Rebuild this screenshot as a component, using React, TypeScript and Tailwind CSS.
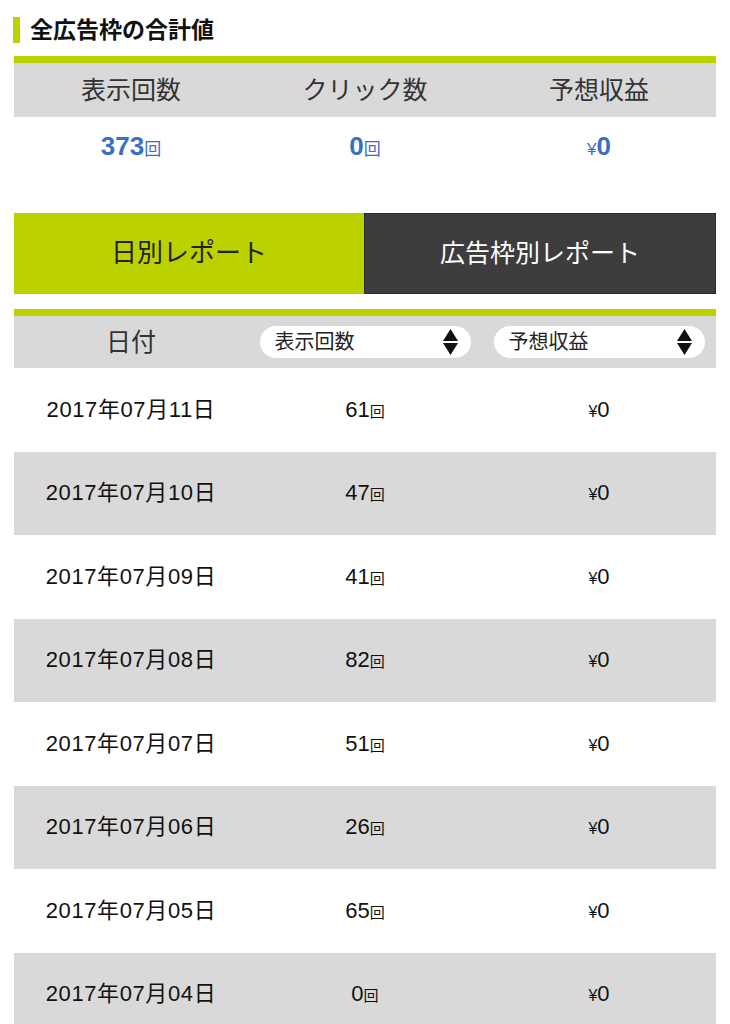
import React from "react";

const rows = [
  { date: "2017年07月11日", count: 61 },
  { date: "2017年07月10日", count: 47 },
  { date: "2017年07月09日", count: 41 },
  { date: "2017年07月08日", count: 82 },
  { date: "2017年07月07日", count: 51 },
  { date: "2017年07月06日", count: 26 },
  { date: "2017年07月05日", count: 65 },
  { date: "2017年07月04日", count: 0 },
];

function SortArrows() {
  return (
    <svg width="15" height="26" viewBox="0 0 15 26" className="shrink-0">
      <polygon points="7.5,0 15,12 0,12" fill="#111" />
      <polygon points="0,14 15,14 7.5,26" fill="#111" />
    </svg>
  );
}

function SortSelect({ label }: { label: string }) {
  return (
    <div className="flex h-[32px] w-[211px] items-center justify-between rounded-full bg-white pl-[15px] pr-[13px]">
      <span className="text-[20px] leading-none text-[#222]">{label}</span>
      <SortArrows />
    </div>
  );
}

export default function App() {
  return (
    <div
      className="min-h-screen bg-white px-[14px] pt-[17px] text-[#222]"
      style={{ fontFamily: '"Liberation Sans", "Noto Sans CJK JP", sans-serif' }}
    >
      {/* 見出し */}
      <div className="flex h-[26px] items-center">
        <div className="-ml-px h-[26px] w-[7px] bg-[#bcd100]" />
        <h2 className="ml-[10px] text-[23px] font-bold leading-none text-[#111]">全広告枠の合計値</h2>
      </div>

      {/* 合計値 */}
      <div className="mt-[13px] border-t-[7px] border-[#bcd100]">
        <div className="grid h-[54px] grid-cols-3 items-center bg-[#d9d9d9] text-center text-[25px] leading-none text-[#333]">
          <div>表示回数</div>
          <div>クリック数</div>
          <div>予想収益</div>
        </div>
        <div className="grid h-[58px] grid-cols-3 items-center text-center font-bold leading-none text-[#3a6fc4]">
          <div>
            <span className="text-[26px]">373</span>
            <span className="text-[17px] font-normal">回</span>
          </div>
          <div>
            <span className="text-[26px]">0</span>
            <span className="text-[17px] font-normal">回</span>
          </div>
          <div>
            <span className="text-[17px] font-normal">¥</span>
            <span className="text-[26px]">0</span>
          </div>
        </div>
      </div>

      {/* タブ */}
      <div className="mt-[38px] flex h-[81px]">
        <div className="flex flex-1 items-center justify-center bg-[#bcd100] text-[26px] text-[#222]">
          日別レポート
        </div>
        <div className="flex flex-1 items-center justify-center border border-[#2a2a2a] bg-[#3d3d3d] text-[25px] text-white">
          広告枠別レポート
        </div>
      </div>

      {/* 日別テーブル */}
      <div className="mt-[15px] border-t-[7px] border-[#bcd100]">
        <div className="grid h-[52px] grid-cols-3 items-center bg-[#d9d9d9]">
          <div className="text-center text-[25px] leading-none text-[#333]">日付</div>
          <div className="flex justify-center">
            <SortSelect label="表示回数" />
          </div>
          <div className="flex justify-center">
            <SortSelect label="予想収益" />
          </div>
        </div>
        {rows.map((r, i) => (
          <div
            key={r.date}
            className={`grid h-[83.5px] grid-cols-3 items-center text-center leading-none text-[#111] ${
              i % 2 === 1 ? "bg-[#d9d9d9]" : "bg-white"
            }`}
          >
            <div className="text-[22px] tracking-[0.6px]">{r.date}</div>
            <div>
              <span className="text-[22px]">{r.count}</span>
              <span className="text-[15px]">回</span>
            </div>
            <div>
              <span className="text-[16px]">¥</span>
              <span className="text-[22px]">0</span>
            </div>
          </div>
        ))}
      </div>
    </div>
  );
}
